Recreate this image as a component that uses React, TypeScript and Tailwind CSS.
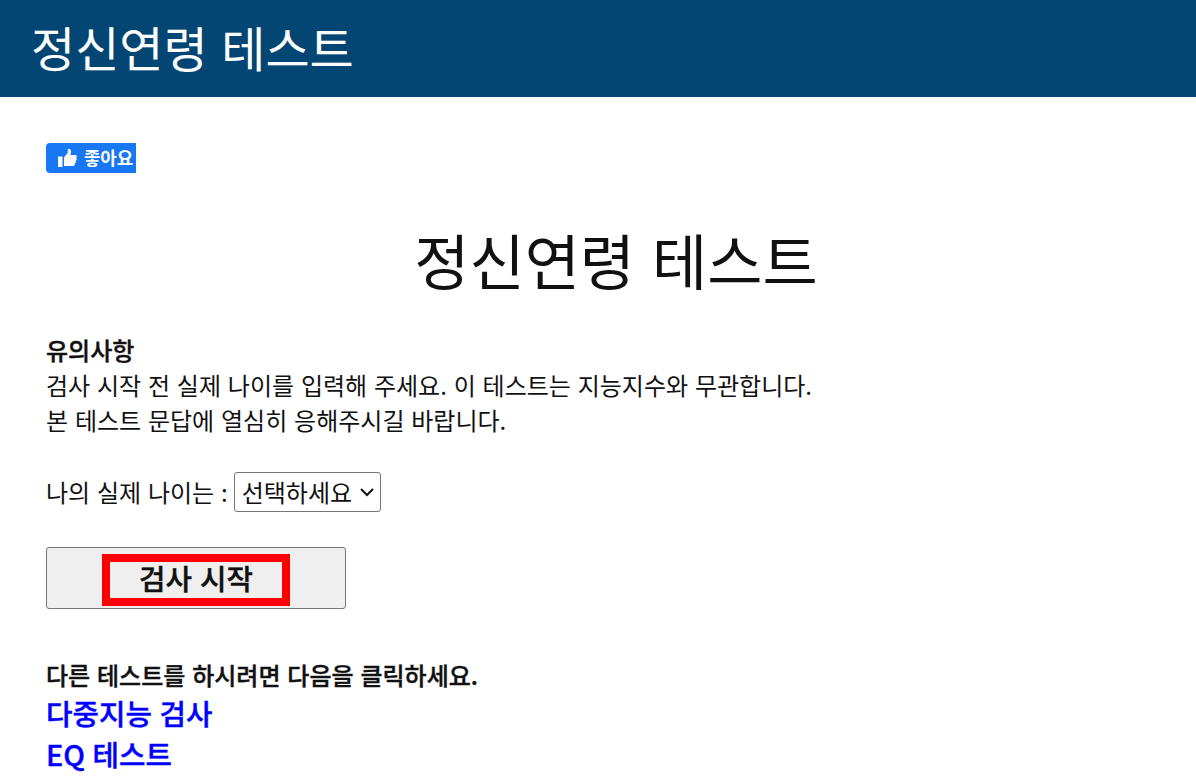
const links = ["다중지능 검사", "EQ 테스트"];

const LikeButton = () => (
  <button className="flex h-[30px] w-[90px] items-center overflow-hidden rounded-l-[4px] bg-[#1877f2] pl-[11px] text-white">
    <svg viewBox="0 0 20 20" className="h-5 w-5 shrink-0" fill="currentColor">
      <path d="M1 8.500h4.500V19H1z" />
      <path d="M7 18V9.500L10.800 4.800V1.400C10.800.4 14 .5 14 3.700c0 1.600-.5 2.600-.7 3.300h5c1 0 1.600.7 1.600 1.500 0 .7-.4 1.200-1 1.500.5.300.8.8.8 1.300 0 .8-.5 1.400-1.200 1.600.3.300.4.6.4 1 0 .7-.5 1.300-1.200 1.400.4 1.500-.5 2.700-1.600 2.700z" />
    </svg>
    <span className="-mt-[2px] ml-[7px] whitespace-nowrap text-[17.8px] font-bold leading-[28px]">좋아요</span>
  </button>
);

const App = () => {
  return (
    <div className="h-[777px] overflow-hidden bg-white font-['Noto_Sans_CJK_KR',sans-serif] text-[24px] leading-[35px] text-[#111] [word-spacing:0.06em]">
      <header className="h-[97px] bg-[#034673] pl-[31px]">
        <h1 className="text-[48px] leading-[93px] text-white [word-spacing:0.06em]">정신연령 테스트</h1>
      </header>

      <main className="px-[46px] pt-[46px]">
        <LikeButton />

        <h2 className="mt-11 pl-9 text-center text-[60px] leading-[84px] [word-spacing:0.06em]">정신연령 테스트</h2>

        {/* Notice */}
        <section className="mt-[31px]">
          <h3 className="font-medium [-webkit-text-stroke:0.4px]">유의사항</h3>
          <p>검사 시작 전 실제 나이를 입력해 주세요. 이 테스트는 지능지수와 무관합니다.</p>
          <p>본 테스트 문답에 열심히 응해주시길 바랍니다.</p>
        </section>

        {/* Age select */}
        <div className="mt-[35px] flex h-10 items-center">
          <span className="-mt-[2px] whitespace-nowrap">나의 실제 나이는 :</span>
          <button className="ml-[6px] flex h-10 w-[147px] items-center justify-between rounded-[3px] border border-[#767676] bg-white pl-[7px] pr-[6px]">
            <span className="-mt-[2px] whitespace-nowrap">선택하세요</span>
            <svg viewBox="0 0 14 9" className="h-[9px] w-[14px]" fill="none" stroke="currentColor" strokeWidth={2}>
              <path d="M1 1l6 6 6-6" />
            </svg>
          </button>
        </div>

        <button className="mt-[35px] flex h-[62px] w-[300px] items-center justify-center rounded-[3px] border border-[#767676] bg-[#efefef] pt-[4px]">
          <span className="flex h-[52px] w-[188px] items-center justify-center border-8 border-[#ff0000] pb-[6px] text-[28.8px] font-medium [-webkit-text-stroke:0.4px] [word-spacing:0.06em]">
            검사 시작
          </span>
        </button>

        {/* Other tests */}
        <section className="mt-12 font-medium [-webkit-text-stroke:0.4px]">
          <p>다른 테스트를 하시려면 다음을 클릭하세요.</p>
          <ul className="mt-px">
            {links.map((link) => (
              <li key={link} className="text-[28.8px] leading-[40.500px] text-[#0000ff] [word-spacing:0.04em]">
                <a href="#">{link}</a>
              </li>
            ))}
          </ul>
        </section>
      </main>
    </div>
  );
};

export default App;
